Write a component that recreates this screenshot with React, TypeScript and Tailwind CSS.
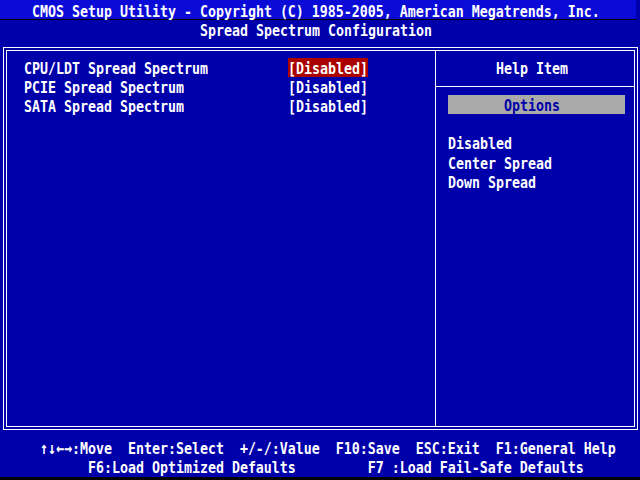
const cell = "inline-block scale-y-125 origin-[50%_6px]";

function Line({ text, className = "" }: { text: string; className?: string }) {
  return (
    <div className={`h-[19.2px] leading-[19.2px] whitespace-pre ${className}`}>
      <span className={cell}>{text}</span>
    </div>
  );
}

const items = [
  { label: "CPU/LDT Spread Spectrum", value: "[Disabled]", active: true },
  { label: "PCIE Spread Spectrum", value: "[Disabled]", active: false },
  { label: "SATA Spread Spectrum", value: "[Disabled]", active: false },
];

const options = ["Disabled", "Center Spread", "Down Spread"];

export default function App() {
  return (
    <div
      className="flex h-[480px] w-[640px] flex-col overflow-hidden bg-[#0000aa] text-[13.29px] font-bold text-white"
      style={{ fontFamily: '"DejaVu Sans Mono", "Liberation Mono", monospace' }}
    >
      {/* title bar */}
      <div className="h-[20px] w-[636px] border-b border-black bg-[#0b0bd8] pt-[1px]">
        <Line text="CMOS Setup Utility - Copyright (C) 1985-2005, American Megatrends, Inc." className="pl-[32px]" />
      </div>
      <div className="h-[18.4px]">
        <Line text="Spread Spectrum Configuration" className="pl-[200px]" />
      </div>

      {/* double frame */}
      <div className="ml-[3px] mt-[8.6px] h-[383px] w-[635px] border border-white p-[2px]">
        <div className="flex h-full border border-white">
          <div className="w-[428px] pl-[17px] pt-[6.6px]">
            {items.map((it) => (
              <div key={it.label} className="grid grid-cols-[264px_80px]">
                <Line text={it.label} />
                <Line text={it.value} className={it.active ? "bg-[#aa0000]" : ""} />
              </div>
            ))}
          </div>
          <div className="flex flex-1 flex-col border-l border-white">
            <div className="h-[36px] border-b border-white pl-[60px] pt-[6.6px]">
              <Line text="Help Item" />
            </div>
            <div className="ml-[12px] mr-[9px] mt-[8px] bg-[#aaaaaa] pl-[56px] text-[#0000aa]">
              <Line text="Options" />
            </div>
            <div className="h-[19.2px]" />
            <div className="pl-[12px]">
              {options.map((o) => (
                <Line key={o} text={o} />
              ))}
            </div>
          </div>
        </div>
      </div>

      {/* key help */}
      <div className="mt-[7.6px]">
        <Line text="     ↑↓←→:Move  Enter:Select  +/-/:Value  F10:Save  ESC:Exit  F1:General Help" />
        <div className="h-[20.2px]">
          <Line text="           F6:Load Optimized Defaults         F7 :Load Fail-Safe Defaults" />
        </div>
      </div>
      <div className="h-[3px] bg-black" />
    </div>
  );
}
